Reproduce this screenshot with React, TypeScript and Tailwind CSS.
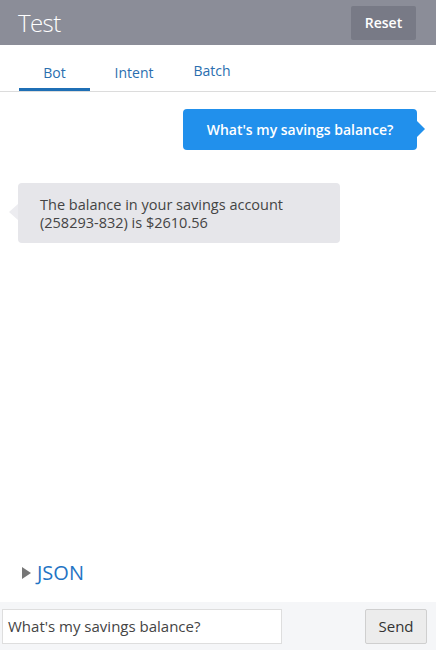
export default function App() {
  return (
    <div
      className="flex h-[650px] w-[436px] flex-col bg-white text-[#333]"
      style={{ fontFamily: '"Open Sans", "Noto Sans", sans-serif' }}
    >
      {/* Header */}
      <div className="flex h-[45px] items-center justify-between bg-[#8b8d98] pl-[18px] pr-[20px]">
        <span className="text-[24px] font-light tracking-tight text-white">Test</span>
        <button className="h-[34px] w-[65px] rounded-[2px] bg-[#787a86] text-[14px] font-semibold text-white">
          Reset
        </button>
      </div>

      {/* Tabs */}
      <div className="flex h-[47px] items-end border-b border-[#dcdcdc] pl-[19px]">
        <div className="flex h-[46px] w-[71px] items-center justify-center border-b-[3px] border-[#1f6fb5] pt-[11px] text-[14px] text-[#2a6eaf]">
          Bot
        </div>
        <div className="flex h-[46px] w-[88px] items-center justify-center pt-[8px] text-[14px] text-[#2a6eaf]">
          Intent
        </div>
        <div className="flex h-[46px] w-[68px] items-center justify-center pt-[5px] text-[14px] text-[#2a6eaf]">
          Batch
        </div>
      </div>

      {/* Conversation */}
      <div className="flex flex-1 flex-col pt-[17px]">
        <div className="flex justify-end pr-[19px]">
          <div className="relative flex h-[41px] w-[234px] items-center justify-center rounded-[4px] bg-[#2190ec] text-[14px] font-semibold text-white">
            What's my savings balance?
            <span className="absolute right-[-8px] top-[12px] h-0 w-0 border-y-[8px] border-l-[8px] border-y-transparent border-l-[#2190ec]" />
          </div>
        </div>

        <div className="mt-[33px] flex pl-[18px]">
          <div className="relative h-[60px] w-[322px] rounded-[4px] bg-[#e6e6ea] px-[22px] pt-[13px] text-[14.5px] leading-[18px] text-[#444]">
            The balance in your savings account
            <br />
            (258293-832) is $2610.56
            <span className="absolute left-[-9px] top-[21px] h-0 w-0 border-y-[8px] border-r-[9px] border-y-transparent border-r-[#ececf0]" />
          </div>
        </div>

        <div className="mt-auto flex items-center gap-[6px] pb-[14px] pl-[22px]">
          <span className="h-0 w-0 border-y-[6px] border-l-[9px] border-y-transparent border-l-[#777]" />
          <span className="text-[20px] text-[#1f74c4]">JSON</span>
        </div>
      </div>

      {/* Input bar */}
      <div className="flex h-[48px] items-center justify-between bg-[#f5f6f8] pl-[2px] pr-[9px]">
        <div className="flex h-[35px] w-[280px] items-center border border-[#dedede] bg-white px-[5px] text-[15px] text-[#444]">
          What's my savings balance?
        </div>
        <button className="h-[35px] w-[62px] rounded-[2px] border border-[#cfcfcf] bg-[#ececec] text-[15px] text-[#333]">
          Send
        </button>
      </div>
    </div>
  );
}
